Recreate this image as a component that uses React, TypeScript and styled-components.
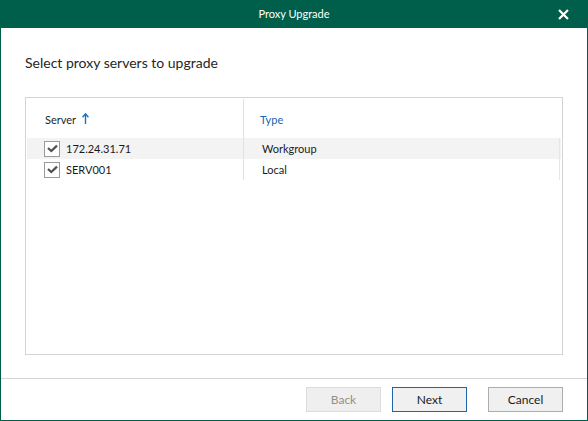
import React from 'react';
import styled, { createGlobalStyle } from 'styled-components';

const GlobalStyle = createGlobalStyle`
  html, body {
    margin: 0;
    padding: 0;
    background: #ffffff;
  }
  * {
    box-sizing: border-box;
  }
`;

interface Proxy {
  server: string;
  type: string;
  checked: boolean;
}

const proxies: Proxy[] = [
  { server: '172.24.31.71', type: 'Workgroup', checked: true },
  { server: 'SERV001', type: 'Local', checked: true },
];

const App: React.FC = () => {
  return (
    <>
      <GlobalStyle />
      <Window>
        <TitleBar>
          <span />
          <Title>Proxy Upgrade</Title>
          <CloseButton aria-label="Close">
            <svg width="11" height="11" viewBox="0 0 11 11">
              <path d="M1 1 L10 10 M10 1 L1 10" stroke="#ffffff" strokeWidth="2.2" />
            </svg>
          </CloseButton>
        </TitleBar>
        <Content>
          <Heading>Select proxy servers to upgrade</Heading>
          <TableBox>
            <HeaderRow>
              <HeaderCell first>
                Server
                <SortArrow width="7" height="11" viewBox="0 0 7 11">
                  <path d="M3.5 1 L3.5 11" stroke="#1a6fc4" strokeWidth="1.4" />
                  <path d="M0.6 4.2 L3.5 0.8 L6.4 4.2" stroke="#1a6fc4" strokeWidth="1.4" fill="none" />
                </SortArrow>
              </HeaderCell>
              <HeaderCell active>Type</HeaderCell>
            </HeaderRow>
            {proxies.map((p, i) => (
              <Row key={p.server} selected={i === 0}>
                <Cell first>
                  <CheckBox>
                    {p.checked && (
                      <svg width="11" height="9" viewBox="0 0 11 9">
                        <path d="M1 4 L4.3 7 L10 1.6" stroke="#505050" strokeWidth="2.2" fill="none" />
                      </svg>
                    )}
                  </CheckBox>
                  {p.server}
                </Cell>
                <Cell last>{p.type}</Cell>
              </Row>
            ))}
          </TableBox>
        </Content>
        <Footer>
          <Button disabled>Back</Button>
          <Button focused>Next</Button>
          <Button gap={21}>Cancel</Button>
        </Footer>
      </Window>
    </>
  );
};

const Window = styled.div`
  width: 588px;
  height: 421px;
  display: flex;
  flex-direction: column;
  border: 1px solid #005f4b;
  border-top: none;
  background: #ffffff;
  font-family: 'Lato', 'Noto Sans', sans-serif;
  color: #000000;
`;

const TitleBar = styled.div`
  height: 28px;
  margin: 0 -1px;
  background: #005f4b;
  display: grid;
  grid-template-columns: 1fr auto 1fr;
  align-items: center;
`;

const Title = styled.div`
  color: #ffffff;
  font-size: 11px;
  line-height: 28px;
`;

const CloseButton = styled.button`
  justify-self: end;
  margin-right: 19px;
  width: 11px;
  height: 11px;
  padding: 0;
  border: none;
  background: transparent;
  display: flex;
  cursor: pointer;
`;

const Content = styled.div`
  flex: 1;
  padding: 0 24px 23px;
  display: flex;
  flex-direction: column;
`;

const Heading = styled.div`
  margin-top: 25px;
  font-size: 14px;
  line-height: 20px;
  color: #262626;
`;

const TableBox = styled.div`
  margin-top: 24px;
  flex: 1;
  border: 1px solid #d4d4d4;
  padding: 1px 1px 0;
  display: flex;
  flex-direction: column;
  font-size: 11px;
`;

const HeaderRow = styled.div`
  display: grid;
  grid-template-columns: 217px 316px;
  height: 39px;
`;

const HeaderCell = styled.div<{ first?: boolean; active?: boolean }>`
  display: flex;
  align-items: center;
  gap: 6px;
  padding-left: ${(p) => (p.first ? '18px' : '16px')};
  padding-top: 1px;
  color: ${(p) => (p.active ? '#1a63ad' : '#1f1f1f')};
  border-right: ${(p) => (p.first ? '1px solid #e2e2e2' : 'none')};
`;

const SortArrow = styled.svg`
  margin-top: -2px;
`;

const Row = styled.div<{ selected?: boolean }>`
  display: grid;
  grid-template-columns: 217px 316px;
  height: 21px;
  background: ${(p) => (p.selected ? '#f3f3f3' : '#ffffff')};
`;

const Cell = styled.div<{ first?: boolean; last?: boolean }>`
  display: flex;
  align-items: center;
  padding-left: ${(p) => (p.first ? '17px' : '18px')};
  color: #1a1a1a;
  border-right: 1px solid ${(p) => (p.first ? '#e2e2e2' : '#e6e6e6')};
`;

const CheckBox = styled.span`
  width: 16px;
  height: 16px;
  border: 1px solid #9a9a9a;
  background: #ffffff;
  margin-right: 6px;
  display: inline-flex;
  align-items: center;
  justify-content: center;
`;

const Footer = styled.div`
  height: 42px;
  border-top: 1px solid #d4d4d4;
  display: flex;
  justify-content: flex-end;
  align-items: flex-start;
  padding: 8px 24px 0 0;
  gap: 11px;
`;

const Button = styled.button<{ focused?: boolean; gap?: number }>`
  width: 75px;
  height: 25px;
  margin-left: ${(p) => (p.gap ? `${p.gap - 11}px` : '0')};
  font-family: inherit;
  font-size: 12px;
  padding: 0;
  background: #f0f0f0;
  color: #1a1a1a;
  border: 1px solid ${(p) => (p.focused ? '#1e64ac' : '#adadad')};

  &:disabled {
    background: #efefef;
    border-color: #dcdcdc;
    color: #8f8f8f;
  }
`;

export default App;
